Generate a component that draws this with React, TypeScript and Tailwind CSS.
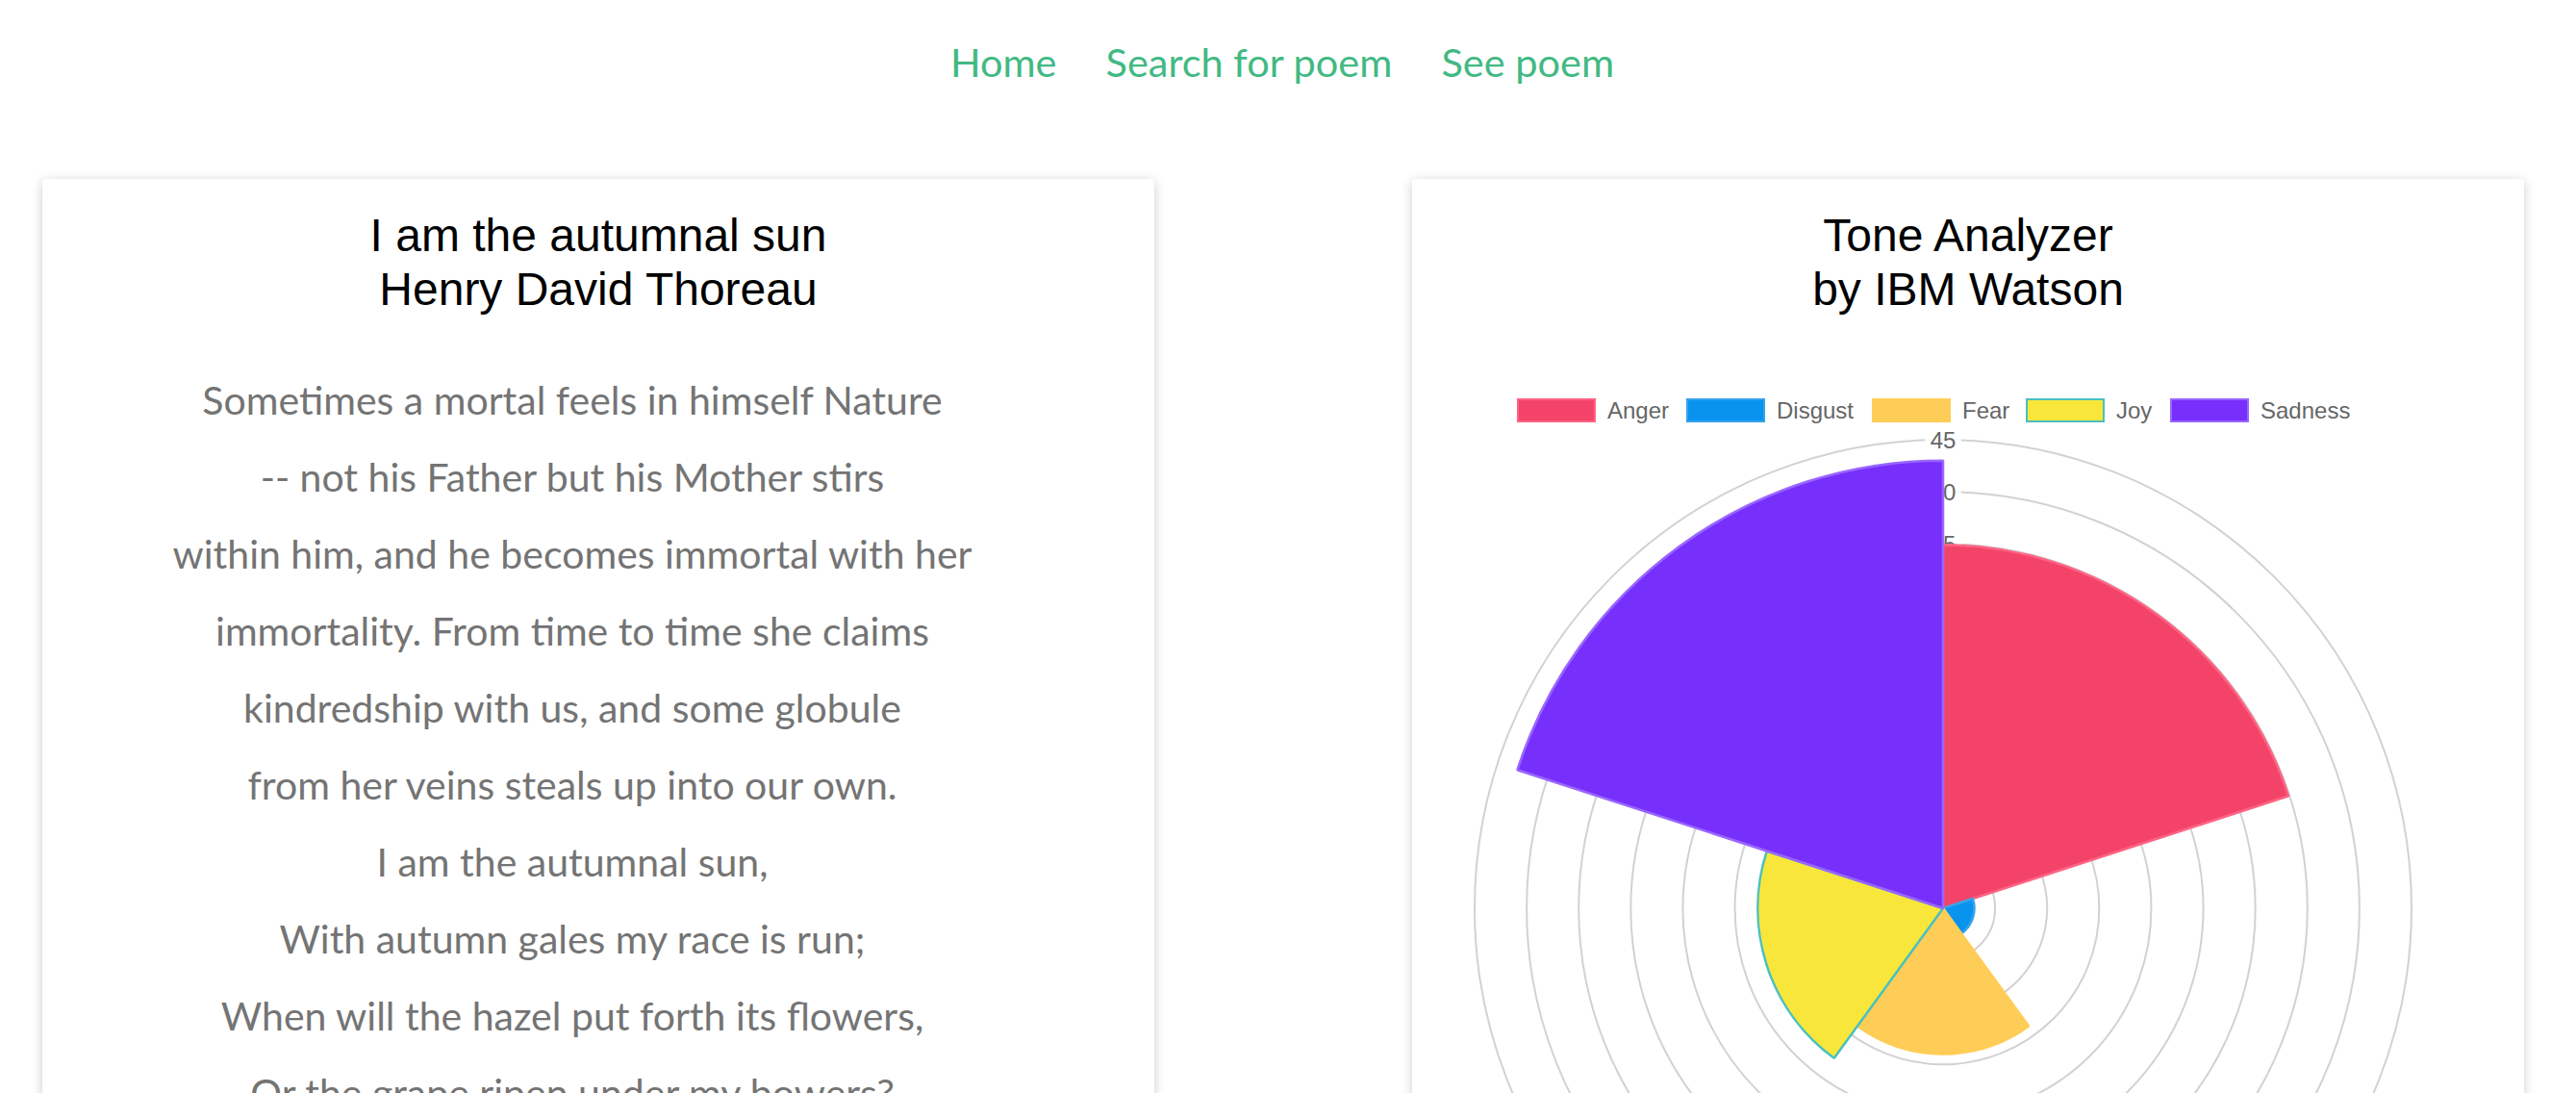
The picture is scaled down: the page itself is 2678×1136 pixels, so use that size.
const poem = [
  "Sometimes a mortal feels in himself Nature",
  "-- not his Father but his Mother stirs",
  "within him, and he becomes immortal with her",
  "immortality. From time to time she claims",
  "kindredship with us, and some globule",
  "from her veins steals up into our own.",
  "I am the autumnal sun,",
  "With autumn gales my race is run;",
  "When will the hazel put forth its flowers,",
  "Or the grape ripen under my bowers?",
  "When will the harvest or the hunter's moon",
  "Turn my midnight into mid-noon?",
  "I am all sere and yellow,",
  "And to my core mellow.",
];

const tones = [
  { name: "Anger", value: 34.9, fill: "#f34369", stroke: "#ff6384", lx: 109 },
  { name: "Disgust", value: 3.0, fill: "#0894ee", stroke: "#36a2eb", lx: 285 },
  { name: "Fear", value: 14.0, fill: "#fecd57", stroke: "#ffcd56", lx: 478 },
  { name: "Joy", value: 17.8, fill: "#f8e73a", stroke: "#4bc0c0", lx: 638 },
  { name: "Sadness", value: 43.0, fill: "#772ffb", stroke: "#9966ff", lx: 788 },
];

const CX = 552;
const CY = 544;
const UNIT = 487 / 45;

function wedge(r: number, a0: number, a1: number) {
  const rad = (d: number) => (d * Math.PI) / 180;
  const x0 = CX + r * Math.sin(rad(a0));
  const y0 = CY - r * Math.cos(rad(a0));
  const x1 = CX + r * Math.sin(rad(a1));
  const y1 = CY - r * Math.cos(rad(a1));
  return `M${CX} ${CY} L${x0} ${y0} A${r} ${r} 0 0 1 ${x1} ${y1} Z`;
}

function ToneChart() {
  const ticks = [5, 10, 15, 20, 25, 30, 35, 40, 45];
  return (
    <svg className="mt-[71px] block" width={1156} height={1080} viewBox="0 0 1156 1080">
      {/* legend */}
      {tones.map((t) => (
        <g key={t.name}>
          <rect x={t.lx + 1} y={15} width={80} height={23} fill={t.fill} stroke={t.stroke} strokeWidth={2} />
          <text x={t.lx + 94} y={35} fontSize={24} fill="#666" fontFamily="'Liberation Sans', Arial, sans-serif">
            {t.name}
          </text>
        </g>
      ))}
      {/* grid */}
      {ticks.map((k) => (
        <circle key={k} cx={CX} cy={CY} r={k * UNIT} fill="none" stroke="#d2d2d2" strokeWidth={2} />
      ))}
      {ticks.map((k) => (
        <g key={"l" + k}>
          <rect x={CX - 19} y={CY - k * UNIT - 16} width={38} height={32} fill="#fff" fillOpacity={0.85} />
          <text
            x={CX}
            y={CY - k * UNIT + 8.5}
            fontSize={24}
            fill="#666"
            textAnchor="middle"
            fontFamily="'Liberation Sans', Arial, sans-serif"
          >
            {k}
          </text>
        </g>
      ))}
      {/* data */}
      {tones.map((t, i) => (
        <path
          key={"w" + t.name}
          d={wedge(t.value * UNIT, i * 72, (i + 1) * 72)}
          fill={t.fill}
          stroke={t.stroke}
          strokeWidth={2.5}
          strokeLinejoin="bevel"
        />
      ))}
    </svg>
  );
}

export default function App() {
  return (
    <div className="min-h-screen bg-white font-['Lato','Open_Sans',sans-serif]">
      <nav className="flex justify-center gap-[51px] pt-[40px] pr-[12px] text-[41.5px] leading-[48px] text-[#42b983]">
        <a href="#">Home</a>
        <a href="#">Search for poem</a>
        <a href="#">See poem</a>
      </nav>

      <main className="mt-[98px] flex gap-[268px] pl-[44px]">
        <section className="w-[1156px] shrink-0 rounded-[4px] bg-white pt-[31px] pb-[60px] shadow-[0_2px_12px_rgba(0,0,0,0.2)]">
          <h2 className="text-center font-['Liberation_Sans',Arial,sans-serif] text-[48px] leading-[56px] text-black">
            I am the autumnal sun
            <br />
            Henry David Thoreau
          </h2>
          <div className="mt-[47px] pr-[54px] text-center text-[41px] leading-[80px] text-[#747474]">
            {poem.map((line, i) => (
              <p key={i}>{line}</p>
            ))}
          </div>
        </section>

        <section className="w-[1156px] shrink-0 rounded-[4px] bg-white pt-[31px] shadow-[0_2px_12px_rgba(0,0,0,0.2)]">
          <h2 className="text-center font-['Liberation_Sans',Arial,sans-serif] text-[48px] leading-[56px] text-black">
            Tone Analyzer
            <br />
            by IBM Watson
          </h2>
          <ToneChart />
        </section>
      </main>
    </div>
  );
}
